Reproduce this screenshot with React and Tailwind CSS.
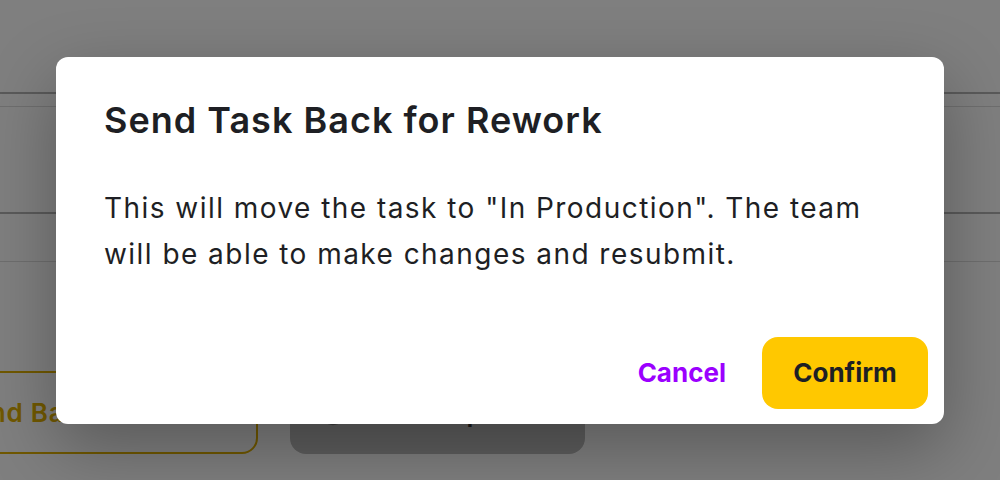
import React from "react";

// Page behind the modal: header rows, section dividers and the task action buttons
function TaskPage() {
    return (
        <div className="h-[480px] overflow-hidden bg-white">
            <div className="h-[94px] border-b-2 border-[#b4b4b4]" />
            <div className="h-[13px] border-b border-[#dcdcdc]" />
            <div className="h-[107px] border-b-2 border-[#b4b4b4]" />
            <div className="h-[48px] border-b border-[#dcdcdc]" />

            {/* Action buttons */}
            <div className="mt-[109px] flex gap-[32px]">
                <button className="-ml-[60px] flex h-[83px] w-[318px] items-center rounded-2xl border-2 border-[#e0b000] pl-[14px] text-[26px] font-semibold tracking-[0.03em] text-[#e0b000]">
                    Send Back
                </button>
                <button className="flex h-[83px] w-[295px] items-center gap-3 rounded-2xl bg-[#bcbcbc] pl-[30px] text-[26px] font-semibold text-[#333]">
                    <svg width="26" height="26" viewBox="0 0 24 24" fill="none" stroke="#777" strokeWidth="2.5">
                        <circle cx="12" cy="12" r="10" />
                        <path d="m8 12 3 3 5-6" />
                    </svg>
                    <span className="ml-[50px]">Complete</span>
                </button>
            </div>
            <p className="mt-[20px] pl-[92px] text-[24px] text-[#333]">Needs changes before approval</p>
        </div>
    );
}

// Confirmation dialog for sending a task back
function ReworkDialog() {
    return (
        <div className="flex h-[367px] w-[888px] flex-col rounded-xl bg-white shadow-[0_24px_70px_rgba(0,0,0,0.3)]">
            <div className="px-[48px] pt-[41px]">
                <h2 className="text-[36px] leading-[44px] font-semibold tracking-[0.028em] text-[#1e1f24]">
                    Send Task Back for Rework
                </h2>
                <p className="mt-[43px] text-[28px] leading-[46px] tracking-[0.052em] text-[#1e1f24]">
                    This will move the task to "In Production". The team will be able to make changes and resubmit.
                </p>
            </div>
            <div className="mt-auto flex items-center justify-end gap-[20px] p-[15px] pr-[16px]">
                <button className="px-[16px] text-[26px] font-bold text-[#9b00ff]">Cancel</button>
                <button className="h-[72px] w-[166px] rounded-2xl bg-[#ffc800] text-[26px] font-bold text-[#1e1f24]">
                    Confirm
                </button>
            </div>
        </div>
    );
}

export default function App() {
    return (
        <div className="relative h-[480px] w-[1000px] overflow-hidden font-['Inter',sans-serif]">
            <TaskPage />
            <div className="absolute inset-0 flex items-center justify-center bg-black/50">
                <ReworkDialog />
            </div>
        </div>
    );
}
